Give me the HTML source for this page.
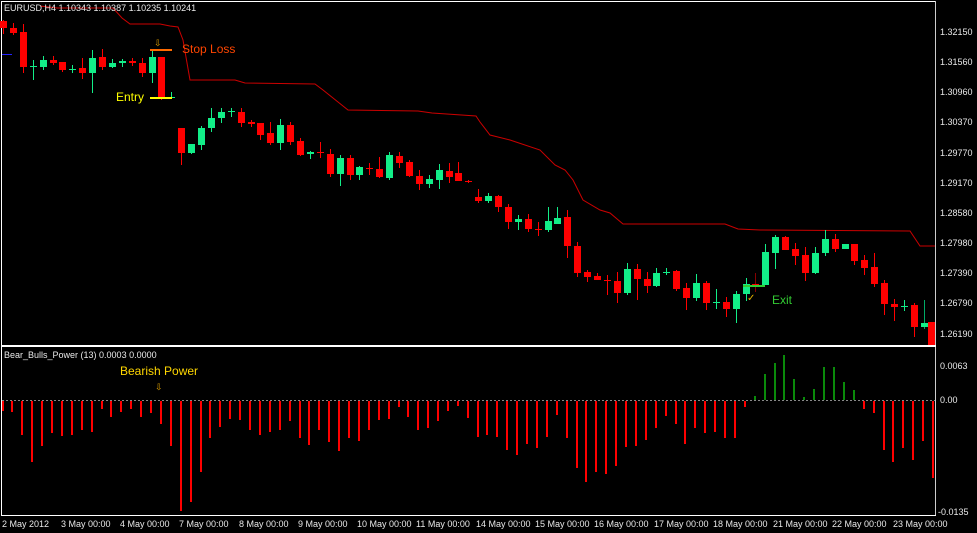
<!DOCTYPE html>
<html><head><meta charset="utf-8"><style>
html,body{margin:0;padding:0;background:#000;width:977px;height:533px;overflow:hidden}
svg{display:block}
text{font-family:"Liberation Sans",sans-serif}
.ax{font-size:9px;fill:#e8e8e8}
.g{fill:#12ee88}.r{fill:#ff0000}
</style></head><body>
<svg width="977" height="533" viewBox="0 0 977 533" xmlns="http://www.w3.org/2000/svg">
<rect width="977" height="533" fill="#000"/>
<!-- frame -->
<rect x="1" y="1" width="935" height="1" fill="#fff"/>
<rect x="1" y="1" width="1" height="515" fill="#fff"/>
<rect x="935" y="1" width="1" height="515" fill="#ccc"/>
<rect x="1" y="345" width="935" height="2" fill="#fff"/>
<rect x="1" y="515" width="935" height="1" fill="#fff"/>

<!-- resistance line -->
<polyline fill="none" stroke="#cc0000" stroke-width="1" points="40,6 57,8 113,8 122,18 130,24 160,24 170,26 178,27 183,40 190,80 235,80 245,83 315,84 323,90 348,110 418,111 432,113 476,116 480,122 490,135 510,140 540,150 555,165 565,170 573,180 583,200 600,210 610,213 623,224 725,224 738,229 760,230 910,231 920,246 935,246"/>

<!-- candles -->
<g>
<rect x="3" y="20" width="1" height="14" class="r"/><rect x="0" y="21" width="7" height="7" class="r"/>
<rect x="13" y="23" width="1" height="12" class="r"/><rect x="10" y="28" width="7" height="5" class="r"/>
<rect x="23" y="24" width="1" height="49" class="r"/><rect x="20" y="32" width="7" height="35" class="r"/>
<rect x="33" y="60" width="1" height="20" class="g"/><rect x="30" y="66" width="7" height="1" class="g"/>
<rect x="43" y="56" width="1" height="14" class="g"/><rect x="40" y="60" width="7" height="7" class="g"/>
<rect x="53" y="56" width="1" height="9" class="r"/><rect x="50" y="60" width="7" height="3" class="r"/>
<rect x="62" y="62" width="1" height="10" class="r"/><rect x="59" y="62" width="7" height="8" class="r"/>
<rect x="72" y="65" width="1" height="8" class="g"/><rect x="69" y="69" width="7" height="1" class="g"/>
<rect x="82" y="58" width="1" height="21" class="r"/><rect x="79" y="68" width="7" height="5" class="r"/>
<rect x="92" y="50" width="1" height="43" class="g"/><rect x="89" y="58" width="7" height="15" class="g"/>
<rect x="102" y="49" width="1" height="21" class="r"/><rect x="99" y="57" width="7" height="10" class="r"/>
<rect x="112" y="59" width="1" height="9" class="g"/><rect x="109" y="63" width="7" height="4" class="g"/>
<rect x="122" y="59" width="1" height="8" class="g"/><rect x="119" y="61" width="7" height="2" class="g"/>
<rect x="132" y="58" width="1" height="8" class="r"/><rect x="129" y="61" width="7" height="2" class="r"/>
<rect x="142" y="58" width="1" height="19" class="r"/><rect x="139" y="63" width="7" height="10" class="r"/>
<rect x="152" y="50" width="1" height="33" class="g"/><rect x="149" y="57" width="7" height="16" class="g"/>
<rect x="161" y="57" width="1" height="43" class="r"/><rect x="158" y="57" width="7" height="41" class="r"/>
<rect x="171" y="92" width="1" height="6" class="g"/><rect x="168" y="97" width="7" height="1" class="g"/>
<rect x="181" y="128" width="1" height="37" class="r"/><rect x="178" y="128" width="7" height="25" class="r"/>
<rect x="191" y="144" width="1" height="10" class="g"/><rect x="188" y="144" width="7" height="9" class="g"/>
<rect x="201" y="126" width="1" height="24" class="g"/><rect x="198" y="128" width="7" height="17" class="g"/>
<rect x="211" y="108" width="1" height="24" class="g"/><rect x="208" y="118" width="7" height="10" class="g"/>
<rect x="221" y="108" width="1" height="15" class="g"/><rect x="218" y="112" width="7" height="6" class="g"/>
<rect x="231" y="108" width="1" height="9" class="g"/><rect x="228" y="111" width="7" height="1" class="g"/>
<rect x="241" y="108" width="1" height="19" class="r"/><rect x="238" y="112" width="7" height="11" class="r"/>
<rect x="251" y="120" width="1" height="7" class="r"/><rect x="248" y="122" width="7" height="2" class="r"/>
<rect x="260" y="123" width="1" height="17" class="r"/><rect x="257" y="123" width="7" height="12" class="r"/>
<rect x="270" y="122" width="1" height="23" class="r"/><rect x="267" y="133" width="7" height="10" class="r"/>
<rect x="280" y="119" width="1" height="31" class="g"/><rect x="277" y="125" width="7" height="18" class="g"/>
<rect x="290" y="122" width="1" height="23" class="r"/><rect x="287" y="125" width="7" height="17" class="r"/>
<rect x="300" y="138" width="1" height="18" class="r"/><rect x="297" y="141" width="7" height="14" class="r"/>
<rect x="310" y="151" width="1" height="8" class="g"/><rect x="307" y="152" width="7" height="2" class="g"/>
<rect x="320" y="142" width="1" height="16" class="r"/><rect x="317" y="152" width="7" height="1" class="r"/>
<rect x="330" y="149" width="1" height="28" class="r"/><rect x="327" y="154" width="7" height="20" class="r"/>
<rect x="340" y="155" width="1" height="31" class="g"/><rect x="337" y="158" width="7" height="16" class="g"/>
<rect x="350" y="155" width="1" height="25" class="r"/><rect x="347" y="158" width="7" height="17" class="r"/>
<rect x="359" y="166" width="1" height="14" class="g"/><rect x="356" y="167" width="7" height="8" class="g"/>
<rect x="369" y="163" width="1" height="12" class="r"/><rect x="366" y="168" width="7" height="1" class="r"/>
<rect x="379" y="157" width="1" height="21" class="r"/><rect x="376" y="169" width="7" height="8" class="r"/>
<rect x="389" y="152" width="1" height="28" class="g"/><rect x="386" y="155" width="7" height="23" class="g"/>
<rect x="399" y="152" width="1" height="16" class="r"/><rect x="396" y="156" width="7" height="7" class="r"/>
<rect x="409" y="160" width="1" height="17" class="r"/><rect x="406" y="162" width="7" height="14" class="r"/>
<rect x="419" y="170" width="1" height="20" class="r"/><rect x="416" y="176" width="7" height="8" class="r"/>
<rect x="429" y="175" width="1" height="13" class="g"/><rect x="426" y="179" width="7" height="5" class="g"/>
<rect x="439" y="164" width="1" height="25" class="g"/><rect x="436" y="170" width="7" height="10" class="g"/>
<rect x="449" y="163" width="1" height="20" class="r"/><rect x="446" y="171" width="7" height="6" class="r"/>
<rect x="458" y="162" width="1" height="19" class="r"/><rect x="455" y="173" width="7" height="8" class="r"/>
<rect x="468" y="180" width="1" height="3" class="r"/><rect x="465" y="181" width="7" height="1" class="r"/>
<rect x="478" y="189" width="1" height="14" class="r"/><rect x="475" y="197" width="7" height="4" class="r"/>
<rect x="488" y="193" width="1" height="10" class="g"/><rect x="485" y="196" width="7" height="5" class="g"/>
<rect x="498" y="195" width="1" height="17" class="r"/><rect x="495" y="196" width="7" height="11" class="r"/>
<rect x="508" y="204" width="1" height="25" class="r"/><rect x="505" y="207" width="7" height="15" class="r"/>
<rect x="518" y="215" width="1" height="15" class="g"/><rect x="515" y="219" width="7" height="3" class="g"/>
<rect x="528" y="214" width="1" height="18" class="r"/><rect x="525" y="219" width="7" height="10" class="r"/>
<rect x="538" y="222" width="1" height="14" class="r"/><rect x="535" y="229" width="7" height="1" class="r"/>
<rect x="548" y="207" width="1" height="25" class="g"/><rect x="545" y="221" width="7" height="9" class="g"/>
<rect x="557" y="207" width="1" height="16" class="g"/><rect x="554" y="218" width="7" height="6" class="g"/>
<rect x="567" y="210" width="1" height="48" class="r"/><rect x="564" y="217" width="7" height="29" class="r"/>
<rect x="577" y="242" width="1" height="35" class="r"/><rect x="574" y="246" width="7" height="27" class="r"/>
<rect x="587" y="270" width="1" height="12" class="r"/><rect x="584" y="272" width="7" height="5" class="r"/>
<rect x="597" y="273" width="1" height="7" class="r"/><rect x="594" y="276" width="7" height="4" class="r"/>
<rect x="607" y="275" width="1" height="20" class="r"/><rect x="604" y="280" width="7" height="1" class="r"/>
<rect x="617" y="272" width="1" height="31" class="r"/><rect x="614" y="281" width="7" height="12" class="r"/>
<rect x="627" y="263" width="1" height="32" class="g"/><rect x="624" y="269" width="7" height="24" class="g"/>
<rect x="637" y="264" width="1" height="36" class="r"/><rect x="634" y="269" width="7" height="10" class="r"/>
<rect x="647" y="272" width="1" height="21" class="r"/><rect x="644" y="279" width="7" height="7" class="r"/>
<rect x="656" y="268" width="1" height="19" class="g"/><rect x="653" y="273" width="7" height="13" class="g"/>
<rect x="666" y="268" width="1" height="7" class="g"/><rect x="663" y="272" width="7" height="1" class="g"/>
<rect x="676" y="270" width="1" height="21" class="r"/><rect x="673" y="271" width="7" height="18" class="r"/>
<rect x="686" y="283" width="1" height="27" class="r"/><rect x="683" y="288" width="7" height="10" class="r"/>
<rect x="696" y="274" width="1" height="27" class="g"/><rect x="693" y="283" width="7" height="15" class="g"/>
<rect x="706" y="281" width="1" height="29" class="r"/><rect x="703" y="283" width="7" height="20" class="r"/>
<rect x="716" y="289" width="1" height="20" class="g"/><rect x="713" y="302" width="7" height="1" class="g"/>
<rect x="726" y="297" width="1" height="20" class="r"/><rect x="723" y="302" width="7" height="7" class="r"/>
<rect x="736" y="291" width="1" height="32" class="g"/><rect x="733" y="294" width="7" height="15" class="g"/>
<rect x="746" y="278" width="1" height="23" class="g"/><rect x="743" y="284" width="7" height="10" class="g"/>
<rect x="755" y="273" width="1" height="19" fill="#800"/><rect x="752" y="284" width="7" height="2" class="r"/>
<rect x="765" y="244" width="1" height="41" class="g"/><rect x="762" y="252" width="7" height="33" class="g"/>
<rect x="775" y="235" width="1" height="34" class="g"/><rect x="772" y="237" width="7" height="16" class="g"/>
<rect x="785" y="236" width="1" height="14" class="r"/><rect x="782" y="237" width="7" height="13" class="r"/>
<rect x="795" y="243" width="1" height="22" class="r"/><rect x="792" y="249" width="7" height="7" class="r"/>
<rect x="805" y="247" width="1" height="34" class="r"/><rect x="802" y="255" width="7" height="18" class="r"/>
<rect x="815" y="247" width="1" height="27" class="g"/><rect x="812" y="253" width="7" height="20" class="g"/>
<rect x="825" y="230" width="1" height="26" class="g"/><rect x="822" y="239" width="7" height="14" class="g"/>
<rect x="835" y="234" width="1" height="18" class="r"/><rect x="832" y="239" width="7" height="10" class="r"/>
<rect x="845" y="244" width="1" height="5" class="g"/><rect x="842" y="244" width="7" height="5" class="g"/>
<rect x="854" y="244" width="1" height="21" class="r"/><rect x="851" y="244" width="7" height="17" class="r"/>
<rect x="864" y="255" width="1" height="20" class="r"/><rect x="861" y="260" width="7" height="8" class="r"/>
<rect x="874" y="253" width="1" height="34" class="r"/><rect x="871" y="267" width="7" height="17" class="r"/>
<rect x="884" y="280" width="1" height="35" class="r"/><rect x="881" y="283" width="7" height="21" class="r"/>
<rect x="894" y="299" width="1" height="22" class="r"/><rect x="891" y="304" width="7" height="3" class="r"/>
<rect x="904" y="300" width="1" height="11" class="g"/><rect x="901" y="306" width="7" height="1" class="g"/>
<rect x="914" y="303" width="1" height="34" class="r"/><rect x="911" y="305" width="7" height="22" class="r"/>
<rect x="924" y="300" width="1" height="29" fill="#0a6"/><rect x="921" y="323" width="7" height="4" class="g"/>
<rect x="928" y="322" width="7" height="23" class="r"/>
</g>

<!-- annotations -->
<rect x="2" y="54" width="10" height="1" fill="#2222ff"/>
<rect x="150" y="49" width="22" height="2" fill="#ff6a00"/>
<rect x="150" y="97" width="22" height="2" fill="#ffff00"/>
<rect x="743" y="285" width="22" height="2" fill="#33cc33"/>
<text x="154" y="46" font-size="9" fill="#e0a000">⇩</text>
<text x="182" y="53" font-size="12" fill="#ff4500">Stop Loss</text>
<text x="116" y="101" font-size="12" fill="#ffff00">Entry</text>
<text x="747" y="301" font-size="10" fill="#e0b000">✓</text>
<text x="772" y="304" font-size="12" fill="#33cc33">Exit</text>
<text x="4" y="11" font-size="9" fill="#e8e8e8">EURUSD,H4  1.10343 1.10387 1.10235 1.10241</text>

<!-- price axis -->
<g class="ax">
<text x="940" y="35">1.32150</text><text x="940" y="65">1.31560</text><text x="940" y="95">1.30960</text>
<text x="940" y="125">1.30370</text><text x="940" y="156">1.29770</text><text x="940" y="186">1.29170</text>
<text x="940" y="216">1.28580</text><text x="940" y="246">1.27980</text><text x="940" y="276">1.27390</text>
<text x="940" y="306">1.26790</text><text x="940" y="337">1.26190</text>
<text x="940" y="369">0.0063</text><text x="940" y="403">0.00</text><text x="938" y="515">-0.0135</text>
</g>

<!-- indicator -->
<text x="4" y="358" font-size="9" fill="#e8e8e8">Bear_Bulls_Power (13)  0.0003 0.0000</text>
<text x="120" y="375" font-size="12" fill="#ffd700">Bearish Power</text>
<text x="155" y="390" font-size="9" fill="#e0a000">⇩</text>
<line x1="2" y1="400.5" x2="935" y2="400.5" stroke="#888" stroke-dasharray="2,2"/>
<g fill="#ff0000">
<rect x="2" y="401" width="2" height="10"/><rect x="11" y="401" width="2" height="11"/><rect x="21" y="401" width="2" height="34"/><rect x="31" y="401" width="2" height="61"/><rect x="41" y="401" width="2" height="45"/><rect x="51" y="401" width="2" height="32"/><rect x="61" y="401" width="2" height="35"/><rect x="71" y="401" width="2" height="34"/><rect x="81" y="401" width="2" height="29"/><rect x="91" y="401" width="2" height="31"/>
<rect x="101" y="401" width="2" height="8"/><rect x="110" y="401" width="2" height="16"/><rect x="120" y="401" width="2" height="11"/><rect x="130" y="401" width="2" height="8"/><rect x="140" y="401" width="2" height="16"/><rect x="150" y="401" width="2" height="12"/><rect x="160" y="401" width="2" height="23"/><rect x="170" y="401" width="2" height="45"/><rect x="180" y="401" width="2" height="110"/><rect x="190" y="401" width="2" height="101"/>
<rect x="200" y="401" width="2" height="71"/><rect x="209" y="401" width="2" height="37"/><rect x="219" y="401" width="2" height="26"/><rect x="229" y="401" width="2" height="18"/><rect x="239" y="401" width="2" height="19"/><rect x="249" y="401" width="2" height="29"/><rect x="259" y="401" width="2" height="34"/><rect x="269" y="401" width="2" height="31"/><rect x="279" y="401" width="2" height="29"/><rect x="289" y="401" width="2" height="20"/>
<rect x="299" y="401" width="2" height="37"/><rect x="308" y="401" width="2" height="44"/><rect x="318" y="401" width="2" height="29"/><rect x="328" y="401" width="2" height="41"/><rect x="338" y="401" width="2" height="50"/><rect x="348" y="401" width="2" height="37"/><rect x="358" y="401" width="2" height="40"/><rect x="368" y="401" width="2" height="29"/><rect x="378" y="401" width="2" height="19"/><rect x="388" y="401" width="2" height="18"/>
<rect x="398" y="401" width="2" height="6"/>
<rect x="407" y="401" width="2" height="16"/><rect x="417" y="401" width="2" height="29"/><rect x="427" y="401" width="2" height="27"/><rect x="437" y="401" width="2" height="20"/><rect x="447" y="401" width="2" height="10"/><rect x="457" y="401" width="2" height="5"/><rect x="467" y="401" width="2" height="17"/><rect x="477" y="401" width="2" height="36"/><rect x="486" y="401" width="2" height="34"/><rect x="496" y="401" width="2" height="36"/>
<rect x="506" y="401" width="2" height="49"/><rect x="516" y="401" width="2" height="54"/><rect x="526" y="401" width="2" height="43"/><rect x="536" y="401" width="2" height="47"/><rect x="546" y="401" width="2" height="36"/><rect x="556" y="401" width="2" height="14"/><rect x="566" y="401" width="2" height="37"/><rect x="576" y="401" width="2" height="67"/><rect x="585" y="401" width="2" height="81"/><rect x="595" y="401" width="2" height="71"/>
<rect x="605" y="401" width="2" height="73"/><rect x="615" y="401" width="2" height="65"/><rect x="625" y="401" width="2" height="46"/><rect x="635" y="401" width="2" height="45"/><rect x="645" y="401" width="2" height="39"/><rect x="655" y="401" width="2" height="27"/><rect x="665" y="401" width="2" height="15"/><rect x="675" y="401" width="2" height="23"/><rect x="684" y="401" width="2" height="43"/><rect x="694" y="401" width="2" height="27"/>
<rect x="704" y="401" width="2" height="32"/><rect x="714" y="401" width="2" height="31"/><rect x="724" y="401" width="2" height="37"/><rect x="734" y="401" width="2" height="37"/><rect x="744" y="401" width="2" height="6"/>
<rect x="863" y="401" width="2" height="8"/><rect x="873" y="401" width="2" height="12"/><rect x="883" y="401" width="2" height="49"/><rect x="892" y="401" width="2" height="61"/><rect x="902" y="401" width="2" height="47"/><rect x="912" y="401" width="2" height="59"/><rect x="922" y="401" width="2" height="40"/><rect x="932" y="401" width="2" height="77"/>
</g>
<g fill="#0a8a0a">
<rect x="754" y="396" width="2" height="4"/><rect x="764" y="374" width="2" height="26"/><rect x="774" y="363" width="2" height="37"/><rect x="783" y="355" width="2" height="45"/><rect x="793" y="379" width="2" height="21"/><rect x="803" y="397" width="2" height="3"/><rect x="813" y="389" width="2" height="11"/><rect x="823" y="367" width="2" height="33"/><rect x="833" y="367" width="2" height="33"/><rect x="843" y="382" width="2" height="18"/><rect x="853" y="390" width="2" height="10"/>
</g>

<!-- time axis -->
<g class="ax">
<text x="2" y="527">2 May 2012</text><text x="61" y="527">3 May 00:00</text><text x="120" y="527">4 May 00:00</text>
<text x="179" y="527">7 May 00:00</text><text x="239" y="527">8 May 00:00</text><text x="298" y="527">9 May 00:00</text>
<text x="357" y="527">10 May 00:00</text><text x="416" y="527">11 May 00:00</text><text x="476" y="527">14 May 00:00</text>
<text x="535" y="527">15 May 00:00</text><text x="594" y="527">16 May 00:00</text><text x="654" y="527">17 May 00:00</text>
<text x="713" y="527">18 May 00:00</text><text x="773" y="527">21 May 00:00</text><text x="832" y="527">22 May 00:00</text>
<text x="893" y="527">23 May 00:00</text>
</g>
</svg>
</body></html>
